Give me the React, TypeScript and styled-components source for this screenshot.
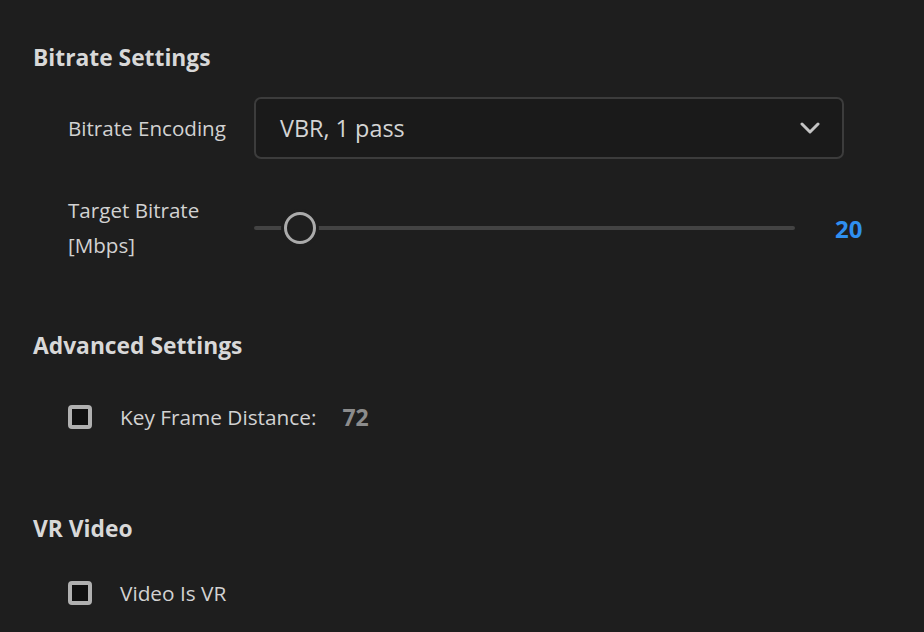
import React, { useState } from 'react'
import styled, { createGlobalStyle } from 'styled-components'

const GlobalStyle = createGlobalStyle`
    html, body {
        margin: 0;
        padding: 0;
        background: #1e1e1e;
    }
    body {
        font-family: "Open Sans", "Noto Sans", sans-serif;
        color: #d6d6d6;
    }
`

const Panel = styled.main`
    width: 924px;
    height: 632px;
    box-sizing: border-box;
    padding: 41px 0 0 33px;
    overflow: hidden;
`

const Section = styled.section<{ gap: number }>`
    margin-bottom: ${p => p.gap}px;
`

const Title = styled.h2`
    margin: 0;
    font-size: 22.8px;
    font-weight: 700;
    line-height: 34px;
    color: #d8d8d8;
`

const Body = styled.div<{ top: number }>`
    padding-left: 35px;
    margin-top: ${p => p.top}px;
    display: flex;
    flex-direction: column;
`

const FieldRow = styled.div<{ gap?: number }>`
    display: flex;
    align-items: center;
    margin-bottom: ${p => p.gap || 0}px;
`

const Label = styled.div`
    width: 186px;
    flex-shrink: 0;
    font-size: 20.6px;
    line-height: 35px;
    color: #d2d2d2;
`

const Select = styled.button`
    width: 590px;
    height: 62px;
    box-sizing: border-box;
    display: flex;
    align-items: center;
    justify-content: space-between;
    padding: 0 22px 0 24px;
    background: #1a1a1a;
    border: 2px solid #3c3c3c;
    border-radius: 7px;
    font-family: inherit;
    font-size: 23.4px;
    color: #d4d4d4;
    cursor: pointer;
`

const SliderWrap = styled.div`
    position: relative;
    width: 541px;
    height: 32px;
    display: flex;
    align-items: center;
`

const Track = styled.div`
    width: 100%;
    height: 4px;
    border-radius: 2px;
    background: #434343;
`

const Thumb = styled.div`
    position: absolute;
    top: 0;
    width: 32px;
    height: 32px;
    box-sizing: border-box;
    border-radius: 50%;
    border: 3px solid #ababab;
    background: #1e1e1e;
    box-shadow: 0 0 0 3px #1e1e1e;
`

const Value = styled.span`
    margin-left: 40px;
    font-size: 24px;
    font-weight: 700;
    color: #2f8ff0;
`

const CheckRow = styled.label`
    display: flex;
    align-items: center;
    height: 40px;
    cursor: pointer;
`

const Box = styled.span<{ checked: boolean }>`
    width: 24px;
    height: 24px;
    box-sizing: border-box;
    border: 4px solid #b0b0b0;
    border-radius: 4px;
    background: ${p => (p.checked ? '#b0b0b0' : '#101010')};
    margin-right: 28px;
    flex-shrink: 0;
`

const CheckText = styled.span`
    font-size: 20.8px;
    color: #d2d2d2;
`

const Muted = styled.span`
    margin-left: 26px;
    font-size: 23px;
    font-weight: 700;
    color: #8c8c8c;
`

function Chevron() {
    return (
        <svg width="20" height="13" viewBox="0 0 20 13">
            <path d="M2 2 L10 10 L18 2" fill="none" stroke="#c4c4c4" strokeWidth="3" strokeLinecap="round" strokeLinejoin="round" />
        </svg>
    )
}

function Checkbox({ label, children }: { label: string; children?: React.ReactNode }) {
    const [checked, setChecked] = useState(false)
    return (
        <CheckRow onClick={() => setChecked(!checked)}>
            <Box checked={checked} />
            <CheckText>{label}</CheckText>
            {children}
        </CheckRow>
    )
}

export default function App() {
    const bitrate = 20
    const pos = ((bitrate - 10) / (500 - 10)) * 541

    return (
        <Panel>
            <GlobalStyle />

            <Section gap={66}>
                <Title>Bitrate Settings</Title>
                <Body top={22}>
                    <FieldRow gap={34}>
                        <Label>Bitrate Encoding</Label>
                        <Select>
                            <span>VBR, 1 pass</span>
                            <Chevron />
                        </Select>
                    </FieldRow>
                    <FieldRow>
                        <Label>Target Bitrate<br />[Mbps]</Label>
                        <SliderWrap>
                            <Track />
                            <Thumb style={{ left: 35 + pos - 16 }} />
                        </SliderWrap>
                        <Value>{bitrate}</Value>
                    </FieldRow>
                </Body>
            </Section>

            <Section gap={75}>
                <Title>Advanced Settings</Title>
                <Body top={34}>
                    <Checkbox label="Key Frame Distance:">
                        <Muted>72</Muted>
                    </Checkbox>
                </Body>
            </Section>

            <Section gap={0}>
                <Title>VR Video</Title>
                <Body top={27}>
                    <Checkbox label="Video Is VR" />
                </Body>
            </Section>
        </Panel>
    )
}
